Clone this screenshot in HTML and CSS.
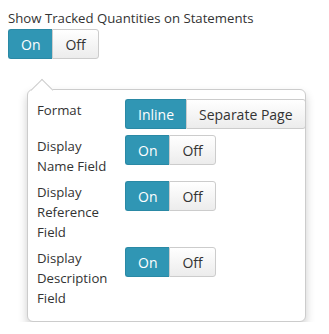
FILE: index.html
```html
<!DOCTYPE html>
<html>
<head>
<meta charset="utf-8">
<link rel="stylesheet" href="styles.css">
</head>
<body>
<div class="title">Show Tracked Quantities on Statements</div>
<div class="toggle">
  <span class="btn active">On</span><span class="btn">Off</span>
</div>
<div class="popover">
  <div class="row">
    <div class="label">Format</div>
    <div class="toggle">
      <span class="btn active">Inline</span><span class="btn">Separate Page</span>
    </div>
  </div>
  <div class="row">
    <div class="label">Display Name Field</div>
    <div class="toggle">
      <span class="btn active">On</span><span class="btn">Off</span>
    </div>
  </div>
  <div class="row">
    <div class="label">Display Reference Field</div>
    <div class="toggle">
      <span class="btn active">On</span><span class="btn">Off</span>
    </div>
  </div>
  <div class="row">
    <div class="label">Display Description Field</div>
    <div class="toggle">
      <span class="btn active">On</span><span class="btn">Off</span>
    </div>
  </div>
</div>
</body>
</html>
```
FILE: styles.css
```css
body {
  margin: 8px;
  font-family: "Segoe UI", "Open Sans", sans-serif;
  font-size: 13.2px;
  color: #333;
  background: #fff;
}
.title {
  line-height: 20px;
  margin-bottom: 1px;
}
.toggle {
  display: inline-flex;
  height: 30px;
  white-space: nowrap;
}
.btn {
  display: flex;
  align-items: center;
  padding: 0 12px;
  border: 1px solid #ccc;
  background: linear-gradient(#fff, #ececec);
  color: #333;
  font-size: 14px;
}
.btn:first-child {
  border-radius: 3px 0 0 3px;
  border-right: none;
}
.btn:last-child {
  border-radius: 0 3px 3px 0;
}
.btn.active {
  background: #3096b4;
  border-color: #2a89a5;
  color: #fff;
}
.popover {
  position: relative;
  margin-top: 30px;
  margin-left: 19px;
  width: 265px;
  padding: 9px 3px 8px 9px;
  border: 1px solid #ccc;
  border-radius: 6px;
  background: #fff;
  box-shadow: 0 5px 10px rgba(0, 0, 0, 0.2);
}
.popover::before {
  content: "";
  position: absolute;
  top: -8px;
  left: 6px;
  width: 15px;
  height: 15px;
  background: #fff;
  border-left: 1px solid #ccc;
  border-top: 1px solid #ccc;
  transform: rotate(45deg);
}
.row {
  display: flex;
  align-items: flex-start;
  min-height: 31px;
  margin-bottom: 5px;
}
.label {
  width: 78px;
  padding-right: 10px;
  flex: none;
  padding-top: 1px;
  line-height: 20px;
}
```
